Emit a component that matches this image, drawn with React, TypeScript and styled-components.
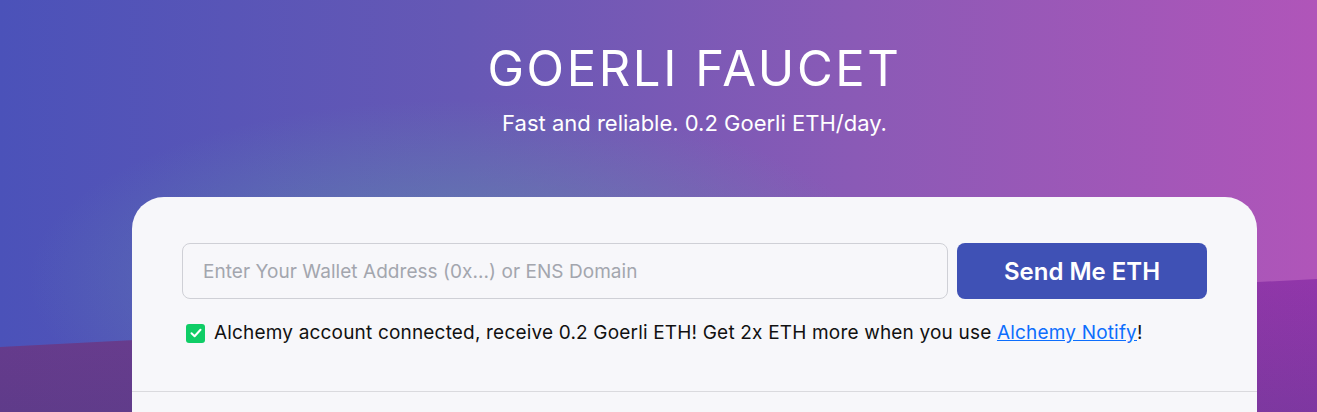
import React from "react";
import styled, { createGlobalStyle } from "styled-components";

const GlobalStyle = createGlobalStyle`
  html, body {
    margin: 0;
    padding: 0;
  }
  body {
    font-family: Inter, "Noto Sans", Roboto, sans-serif;
    overflow: hidden;
  }
`;

const CheckIcon = () => (
  <svg width="12" height="10" viewBox="0 0 12 10" fill="none">
    <path d="M1.5 5.2 L4.6 8.2 L10.5 1.8" stroke="#fff" strokeWidth="2" strokeLinecap="round" strokeLinejoin="round" />
  </svg>
);

const App = () => {
  return (
    <Page>
      <GlobalStyle />
      <Content>
        <Header>
          <Title>GOERLI FAUCET</Title>
          <Subtitle>Fast and reliable. 0.2 Goerli ETH/day.</Subtitle>
        </Header>
        <Card>
          <CardBody>
            <FormRow>
              <AddressInput placeholder="Enter Your Wallet Address (0x...) or ENS Domain" />
              <SendButton>Send Me ETH</SendButton>
            </FormRow>
            <Notice>
              <CheckBox>
                <CheckIcon />
              </CheckBox>
              <span>
                Alchemy account connected, receive 0.2 Goerli ETH! Get 2x ETH more when you use{" "}
                <NoticeLink href="#">Alchemy Notify</NoticeLink>!
              </span>
            </Notice>
          </CardBody>
          <Divider />
          <CardFooter />
        </Card>
      </Content>
    </Page>
  );
};

export default App;

const Page = styled.div`
  position: relative;
  min-height: 100vh;
  overflow: hidden;
  padding-left: 72px;
  background:
    radial-gradient(ellipse 600px 250px at 460px 280px, rgba(95, 152, 172, 0.68), rgba(95, 152, 172, 0) 72%),
    linear-gradient(90deg, #4b52b9 0%, #6658b5 35%, #8a5ab6 65%, #b055b9 100%);

  &::before {
    content: "";
    position: absolute;
    inset: 0;
    background: linear-gradient(90deg, #6b3b8e 0%, #723f91 40%, #8a3aa2 80%, #9136aa 100%);
    clip-path: polygon(0 347px, 100% 279px, 100% 100%, 0 100%);
  }

  &::after {
    content: "";
    position: absolute;
    inset: 0;
    background: linear-gradient(180deg, rgba(40, 60, 120, 0) 280px, rgba(40, 60, 120, 0.18) 412px);
    clip-path: polygon(0 347px, 100% 279px, 100% 100%, 0 100%);
  }
`;

const Content = styled.div`
  position: relative;
  z-index: 1;
  width: 1125px;
  margin: 0 auto;
  display: flex;
  flex-direction: column;
  align-items: stretch;
`;

const Header = styled.header`
  display: flex;
  flex-direction: column;
  align-items: center;
  color: #fff;
  padding-top: 37px;
  padding-bottom: 60px;
`;

const Title = styled.h1`
  margin: 0;
  font-size: 49px;
  font-weight: 400;
  letter-spacing: 2.6px;
  line-height: 64px;
`;

const Subtitle = styled.p`
  margin: 8px 0 0;
  font-size: 22px;
  font-weight: 400;
  line-height: 28px;
`;

const Card = styled.section`
  background: #f7f7fa;
  border-radius: 32px 32px 0 0;
  min-height: 320px;
  display: flex;
  flex-direction: column;
`;

const CardBody = styled.div`
  padding: 46px 50px 0;
  height: 194px;
  box-sizing: border-box;
`;

const FormRow = styled.div`
  display: flex;
  gap: 9px;
`;

const AddressInput = styled.input`
  flex: 1;
  height: 56px;
  box-sizing: border-box;
  border: 1px solid #cfd0d6;
  border-radius: 8px;
  background: #f7f7fa;
  padding: 0 20px;
  font-family: inherit;
  font-size: 19px;
  letter-spacing: 0.05px;
  color: #222;
  outline: none;

  &::placeholder {
    color: #a3a6ae;
  }
`;

const SendButton = styled.button`
  width: 250px;
  height: 56px;
  border: none;
  border-radius: 8px;
  background: #3f51b5;
  color: #fff;
  font-family: inherit;
  font-size: 24px;
  font-weight: 600;
  cursor: pointer;
`;

const Notice = styled.div`
  display: flex;
  align-items: center;
  gap: 9px;
  margin-top: 21px;
  margin-left: 4px;
  font-size: 19px;
  letter-spacing: 0.18px;
  color: #111;
  line-height: 26px;
`;

const CheckBox = styled.span`
  flex: none;
  width: 19px;
  height: 19px;
  border-radius: 3px;
  background: #0fcd66;
  display: flex;
  align-items: center;
  justify-content: center;
`;

const NoticeLink = styled.a`
  color: #0d6efd;
  text-decoration: underline;
`;

const Divider = styled.hr`
  margin: 0;
  border: none;
  border-top: 1px solid #dadade;
`;

const CardFooter = styled.div`
  height: 120px;
`;
